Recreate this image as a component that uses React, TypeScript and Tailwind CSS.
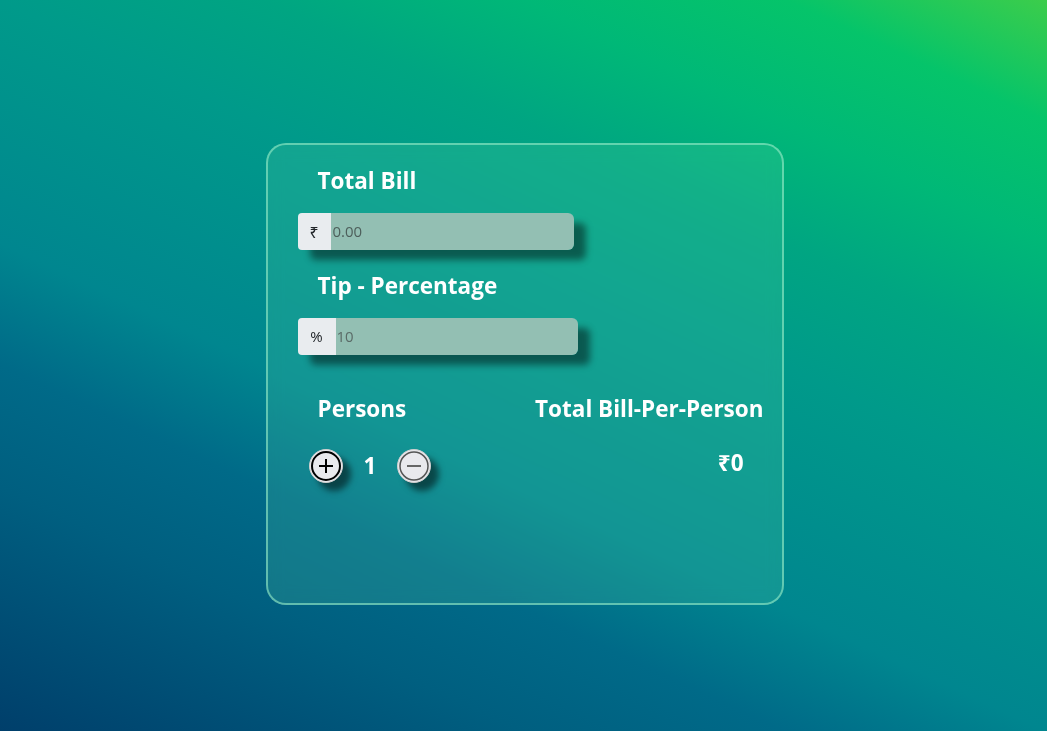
import { useState } from 'react';

export default function App() {
  const [bill, setBill] = useState('');
  const [tip, setTip] = useState('10');
  const [persons, setPersons] = useState(1);

  // per-person amount, rounded to paise
  const total = Number(bill || 0) * (1 + Number(tip || 0) / 100);
  const perPerson = Math.round((total / persons) * 100) / 100;

  return (
    <div
      className="min-h-screen w-full flex justify-center pt-[143px] bg-[linear-gradient(25deg,#003f6b_0%,#005f80_20%,#006a88_30%,#00868f_40%,#009a8a_60%,#00a582_70%,#00b877_80%,#05c46a_90%,#3ccd4b_100%)]"
      style={{ fontFamily: '"Open Sans", "Noto Sans", sans-serif' }}
    >
      <div className="ml-[2px] w-[518px] h-[462px] rounded-[20px] border-2 border-[rgba(150,235,200,0.6)] bg-[rgba(100,220,170,0.18)] backdrop-blur-sm pt-[20px] px-[30px]">
        {/* Total Bill */}
        <h2 className="pl-5 text-[22.5px] leading-[32px] font-bold text-white">Total Bill</h2>
        <div className="mt-[16px] flex w-[276px] h-[37px] rounded-[6px] shadow-[12px_10px_7px_rgba(0,0,0,0.45)]">
          <span className="flex items-center justify-center w-[33px] bg-[#e9ecef] rounded-l-[4px] text-[16px] text-[#212529]">₹</span>
          <input
            value={bill}
            onChange={(e) => setBill(e.target.value)}
            placeholder="0.00"
            className="flex-1 min-w-0 bg-[#93bfb3] rounded-r-[6px] px-[2px] text-[15px] text-[#333] placeholder:text-[#4d5f5b] outline-none"
          />
        </div>

        {/* Tip */}
        <h2 className="mt-[20px] pl-5 text-[22.5px] leading-[32px] font-bold text-white">Tip - Percentage</h2>
        <div className="mt-[16px] flex w-[280px] h-[37px] rounded-[6px] shadow-[12px_10px_7px_rgba(0,0,0,0.45)]">
          <span className="flex items-center justify-center w-[38px] bg-[#e9ecef] rounded-l-[4px] text-[15px] text-[#212529]">%</span>
          <input
            value={tip}
            onChange={(e) => setTip(e.target.value)}
            className="flex-1 min-w-0 bg-[#93bfb3] rounded-r-[6px] px-[1px] text-[15px] text-[#5a6b67] outline-none"
          />
        </div>

        {/* Persons / Total */}
        <div className="mt-[38px] -mr-[12px] flex justify-between pl-5">
          <div>
            <h2 className="text-[22.5px] leading-[32px] font-bold text-white">Persons</h2>
            <div className="mt-[24px] -ml-[9px] flex items-center gap-[21px]">
              <button
                onClick={() => setPersons(persons + 1)}
                className="w-[34px] h-[34px] rounded-full bg-[#e9e9ed] border border-[#cfcfcf] flex items-center justify-center shadow-[8px_8px_6px_rgba(0,0,0,0.5)]"
              >
                <svg width="30" height="30" viewBox="0 0 30 30">
                  <circle cx="15" cy="15" r="14" fill="none" stroke="#000" strokeWidth="2" />
                  <path d="M15 8v14M8 15h14" stroke="#000" strokeWidth="2" />
                </svg>
              </button>
              <span className="text-[22.5px] font-bold text-white leading-none">{persons}</span>
              <button
                onClick={() => setPersons(Math.max(1, persons - 1))}
                className="w-[34px] h-[34px] rounded-full bg-[#e9e9ed] border border-[#cfcfcf] flex items-center justify-center shadow-[8px_8px_6px_rgba(0,0,0,0.5)]"
              >
                <svg width="30" height="30" viewBox="0 0 30 30">
                  <circle cx="15" cy="15" r="14" fill="none" stroke="#555" strokeWidth="1.5" />
                  <path d="M8 15h14" stroke="#666" strokeWidth="2" />
                </svg>
              </button>
            </div>
          </div>
          <div className="text-right">
            <h2 className="text-[22.5px] leading-[32px] font-bold text-white">Total Bill-Per-Person</h2>
            <div className="mt-[27px] pr-5 text-[22.5px] font-bold text-white leading-none">₹{perPerson}</div>
          </div>
        </div>
      </div>
    </div>
  );
}
